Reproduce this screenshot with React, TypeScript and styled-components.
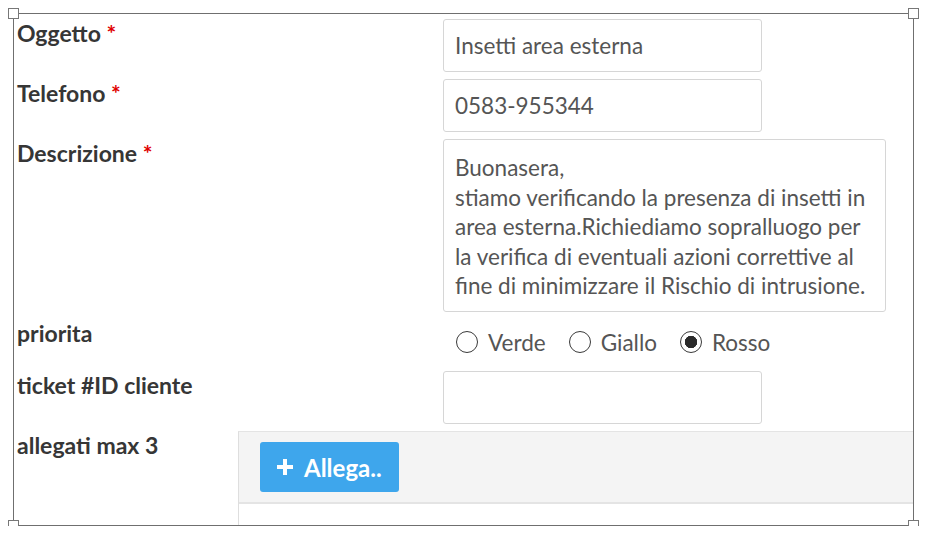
import styled, { createGlobalStyle } from "styled-components";

const GlobalStyle = createGlobalStyle`
  html, body {
    margin: 0;
    padding: 0;
    background: #ffffff;
  }
  body {
    font-family: Lato, "Open Sans", sans-serif;
  }
`;

const App = () => {
  return (
    <>
      <GlobalStyle />
      <Stage>
        <Frame>
          <Row>
            <Label>
              Oggetto <Required>*</Required>
            </Label>
            <TextInput defaultValue="Insetti area esterna" />
          </Row>
          <Row>
            <Label>
              Telefono <Required>*</Required>
            </Label>
            <TextInput defaultValue="0583-955344" />
          </Row>
          <Row>
            <Label>
              Descrizione <Required>*</Required>
            </Label>
            <TextArea>
              Buonasera,
              <br />
              stiamo verificando la presenza di insetti in area esterna.Richiediamo
              sopralluogo per la verifica di eventuali azioni correttive al fine di
              minimizzare il Rischio di intrusione.
            </TextArea>
          </Row>
          <Row>
            <Label>priorita</Label>
            <RadioGroup>
              <RadioOption>
                <RadioDot />
                Verde
              </RadioOption>
              <RadioOption>
                <RadioDot />
                Giallo
              </RadioOption>
              <RadioOption>
                <RadioDot checked />
                Rosso
              </RadioOption>
            </RadioGroup>
          </Row>
          <Row>
            <Label>ticket #ID cliente</Label>
            <TextInput defaultValue="" />
          </Row>
          <Row labelWidth={224}>
            <Label>allegati max 3</Label>
            <UploadPanel>
              <UploadBar>
                <AttachButton>
                  <PlusIcon viewBox="0 0 16 16">
                    <path d="M6 0h4v6h6v4h-6v6H6v-6H0V6h6z" fill="#fff" />
                  </PlusIcon>
                  Allega..
                </AttachButton>
              </UploadBar>
            </UploadPanel>
          </Row>
        </Frame>
        <Handle style={{ left: -5, top: -5 }} />
        <Handle style={{ right: -5, top: -5 }} />
        <Handle style={{ left: -5, bottom: -5 }} />
        <Handle style={{ right: -5, bottom: -5 }} />
      </Stage>
    </>
  );
};

export default App;

const Stage = styled.div`
  position: relative;
  margin: 13px 0 0 13px;
  width: 901px;
  height: 513px;
`;

const Frame = styled.div`
  box-sizing: border-box;
  width: 100%;
  height: 100%;
  border: 1px solid #6f6f6f;
  overflow: hidden;
  padding-top: 5px;
  display: flex;
  flex-direction: column;
  gap: 7px;
`;

const Handle = styled.div`
  position: absolute;
  width: 9px;
  height: 9px;
  background: #ffffff;
  border: 1px solid #777777;
`;

const Row = styled.div<{ labelWidth?: number }>`
  display: grid;
  grid-template-columns: ${(p) => p.labelWidth ?? 429}px 1fr;
  align-items: start;
`;

const Label = styled.div`
  padding-left: 3px;
  font-family: Lato, "Open Sans", sans-serif;
  font-weight: 700;
  font-size: 23px;
  line-height: 29px;
  color: #363636;
  white-space: nowrap;
`;

const Required = styled.span`
  color: #e00000;
`;

const TextInput = styled.input`
  box-sizing: border-box;
  width: 319px;
  height: 53px;
  padding: 0 11px;
  border: 1px solid #d6d6d6;
  border-radius: 3px;
  font-family: Lato, "Open Sans", sans-serif;
  font-size: 22.5px;
  color: #555555;
  background: #ffffff;
  outline: none;
`;

const TextArea = styled.div`
  box-sizing: border-box;
  width: 443px;
  height: 173px;
  padding: 13px 11px 0;
  border: 1px solid #d6d6d6;
  border-radius: 3px;
  font-family: Lato, "Open Sans", sans-serif;
  font-size: 22.5px;
  line-height: 29.5px;
  color: #555555;
`;

const RadioGroup = styled.div`
  display: flex;
  align-items: center;
  gap: 23px;
  height: 45px;
  padding: 1px 0 0 13px;
  box-sizing: border-box;
`;

const RadioOption = styled.label`
  display: flex;
  align-items: center;
  gap: 10px;
  font-family: Lato, "Open Sans", sans-serif;
  font-size: 22.5px;
  color: #555555;
`;

const RadioDot = styled.span<{ checked?: boolean }>`
  box-sizing: border-box;
  width: 22px;
  height: 22px;
  border-radius: 50%;
  border: 1.5px solid #3a3a3a;
  background: ${(p) =>
    p.checked ? "radial-gradient(circle, #2a2a2a 0 6px, #ffffff 6.5px)" : "#ffffff"};
`;

const UploadPanel = styled.div`
  border-top: 1px solid #e4e4e4;
  border-left: 1px solid #dedede;
  height: 120px;
  background: #ffffff;
`;

const UploadBar = styled.div`
  background: #f4f4f4;
  border-bottom: 2px solid #e4e4e4;
  padding: 10px 0 10px 21px;
`;

const AttachButton = styled.button`
  display: flex;
  align-items: center;
  gap: 11px;
  box-sizing: border-box;
  width: 139px;
  height: 50px;
  padding: 0 0 0 17px;
  border: none;
  border-radius: 3px;
  background: #3ea6ec;
  color: #ffffff;
  font-family: Lato, "Open Sans", sans-serif;
  font-weight: 700;
  font-size: 24px;
`;

const PlusIcon = styled.svg`
  width: 16px;
  height: 16px;
  flex-shrink: 0;
`;
